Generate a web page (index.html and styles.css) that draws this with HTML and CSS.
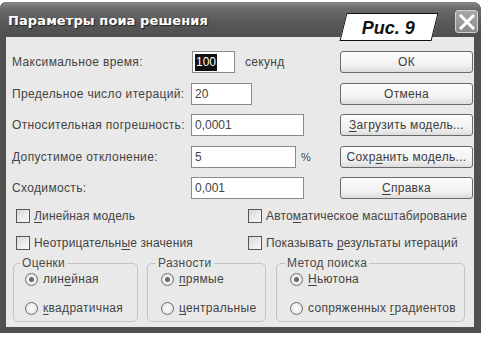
FILE: index.html
```html
<!DOCTYPE html>
<html lang="ru">
<head>
<meta charset="utf-8">
<title>Параметры поиска решения</title>
<link rel="stylesheet" href="styles.css">
</head>
<body>
<div class="window">
  <div class="titlebar">
    <span class="title">Параметры поиа решения</span>
    <span class="close">
      <svg width="16" height="16" viewBox="0 0 16 16"><path d="M2 2 L14 14 M14 2 L2 14" stroke="#fff" stroke-width="3" stroke-linecap="square"/></svg>
    </span>
  </div>
  <div class="fig"><span class="fig-text">Рис. 9</span></div>
  <div class="content">
    <div class="top">
      <div class="fields">
        <div class="row"><span class="label">Максимальное время:</span><span class="input w1"><span class="sel">100</span></span><span class="unit">секунд</span></div>
        <div class="row"><span class="label">Предельное число итераций:</span><span class="input w2">20</span></div>
        <div class="row"><span class="label">Относительная погрешность:</span><span class="input w3">0,0001</span></div>
        <div class="row"><span class="label">Допустимое отклонение:</span><span class="input w4">5</span><span class="unit pct">%</span></div>
        <div class="row"><span class="label">Сходимость:</span><span class="input w3">0,001</span></div>
      </div>
      <div class="buttons">
        <span class="btn">ОК</span>
        <span class="btn">Отмена</span>
        <span class="btn"><u>З</u>агрузить модель...</span>
        <span class="btn">Сохр<u>а</u>нить модель...</span>
        <span class="btn"><u>С</u>правка</span>
      </div>
    </div>
    <div class="checks">
      <label class="chk"><span class="box"></span><span><u>Л</u>инейная модель</span></label>
      <label class="chk"><span class="box"></span><span>Авто<u>м</u>атическое масштабирование</span></label>
      <label class="chk"><span class="box"></span><span>Неотрицательн<u>ы</u>е значения</span></label>
      <label class="chk"><span class="box"></span><span>Показывать <u>р</u>езультаты итераций</span></label>
    </div>
    <div class="groups">
      <fieldset class="grp g1">
        <legend>Оценки</legend>
        <div class="rad"><span class="dot on"></span><span>лин<u>е</u>йная</span></div>
        <div class="rad"><span class="dot"></span><span><u>к</u>вадратичная</span></div>
      </fieldset>
      <fieldset class="grp g2">
        <legend>Разности</legend>
        <div class="rad"><span class="dot on"></span><span><u>п</u>рямые</span></div>
        <div class="rad"><span class="dot"></span><span><u>ц</u>ентральные</span></div>
      </fieldset>
      <fieldset class="grp g3">
        <legend>Метод поиска</legend>
        <div class="rad"><span class="dot on"></span><span><u>Н</u>ьютона</span></div>
        <div class="rad"><span class="dot"></span><span>сопряженных <u>г</u>радиентов</span></div>
      </fieldset>
    </div>
  </div>
</div>
</body>
</html>
```
FILE: styles.css
```css
* { box-sizing: border-box; }
html, body { margin: 0; padding: 0; background: #fff; }
body {
  width: 488px; height: 337px; overflow: hidden;
  font-family: "Liberation Sans", Arial, sans-serif;
  font-size: 12px;
  color: #444;
  white-space: nowrap;
}
.window {
  position: relative;
  margin-top: 2px;
  width: 481px;
  height: 331px;
  background: #505050;
  border-radius: 6px 8px 0 0;
  padding: 0 7px 6px 6px;
  display: flex;
  flex-direction: column;
}
.titlebar {
  height: 35px;
  margin: 0 -7px 0 -6px;
  padding: 0 3px 0 8px;
  display: flex;
  align-items: center;
  justify-content: space-between;
  background: linear-gradient(#8a8a8a 0%, #6a6a6a 20%, #585858 60%, #4e4e4e 100%);
  border-radius: 6px 8px 0 0;
}
.title {
  color: #fff;
  font-family: "DejaVu Sans", sans-serif;
  font-weight: bold;
  font-size: 13px;
  letter-spacing: 0.1px;
  text-shadow: 1px 1px 1px #222;
  margin-top: 2px;
}
.close {
  width: 23px; height: 23px;
  border: 1px solid #d0d0d0;
  border-radius: 3px;
  background: linear-gradient(#a8a8a8, #8a8a8a);
  display: flex; align-items: center; justify-content: center;
  margin-top: 4px;
}
.fig {
  position: absolute;
  left: 343px; top: 11px;
  width: 92px; height: 28px;
  background: #fff;
  border: 1.5px solid #111;
  transform: skewX(-14deg);
  display: flex; align-items: center; justify-content: center;
}
.fig-text {
  transform: skewX(14deg);
  font-family: "Liberation Sans", Arial, sans-serif;
  font-weight: bold; font-style: italic;
  font-size: 18px; color: #111;
  margin-top: 2px;
}
.content {
  flex: 1;
  background: #e9e9e9;
  padding: 14px 0 0 6px;
  display: flex; flex-direction: column;
}
.top { display: flex; justify-content: space-between; }
.fields { display: flex; flex-direction: column; gap: 9.5px; }
.row { display: flex; align-items: center; height: 22px; }
.label { width: 179px; letter-spacing: 0.35px; }
.input {
  height: 22px;
  background: #fff;
  border: 1px solid #8a8a8a;
  padding: 0 3px;
  display: flex; align-items: center;
}
.w1 { width: 43px; margin-left: 1px; padding-left: 2px; }
.w2 { width: 61px; }
.w3 { width: 113px; }
.w4 { width: 105px; }
.sel { background: #111; color: #fff; padding: 0 1px; line-height: 17px; }
.unit { margin-left: 10px; letter-spacing: 0.3px; }
.pct { margin-left: 5px; font-size: 11px; }
.buttons { display: flex; flex-direction: column; gap: 9.5px; margin-right: 1px; }
.btn {
  width: 133px; height: 22px;
  border: 1px solid #6a6a6a;
  border-radius: 3px;
  background: linear-gradient(#fdfdfd, #f0f0f0 70%, #dcdcdc);
  display: flex; align-items: center; justify-content: center;
  color: #3c3c3c;
  letter-spacing: 0.3px;
}
.checks {
  display: grid;
  grid-template-columns: 232px auto;
  justify-content: start;
  row-gap: 13px;
  padding: 10px 0 0 4px;
  letter-spacing: 0.15px;
}
.chk { display: flex; align-items: center; gap: 4px; height: 14px; }
.box {
  width: 14px; height: 14px;
  border: 1px solid #555;
  background: linear-gradient(135deg, #d8d8d8, #fafafa);
}
.groups {
  display: flex;
  gap: 9px;
  padding: 6px 0 0 1px;
  letter-spacing: 0.3px;
}
.grp {
  margin: 0;
  border: 1px solid #c4c4c4;
  border-radius: 5px;
  padding: 0 0 0 11px;
  height: 66px;
  display: flex; flex-direction: column; gap: 14px;
}
.grp legend { padding: 0 2px; margin-left: -5px; color: #4a4a4a; }
.g1 { width: 125px; }
.g2 { width: 119px; padding-left: 13px; }
.g3 { width: 189px; margin-left: 1px; padding-left: 13px; }
.rad { display: flex; align-items: center; gap: 5px; height: 14px; margin-top: 1px; }
.grp legend + .rad { margin-top: 2px; }
.dot {
  width: 13px; height: 13px;
  border-radius: 50%;
  border: 1px solid #6a6a6a;
  background: radial-gradient(circle, #fff, #dedede);
  display: flex; align-items: center; justify-content: center;
}
.dot.on::after {
  content: "";
  width: 5px; height: 5px; border-radius: 50%;
  background: #6a6a6a;
}
u { text-decoration: underline; text-underline-offset: 2px; }
```
